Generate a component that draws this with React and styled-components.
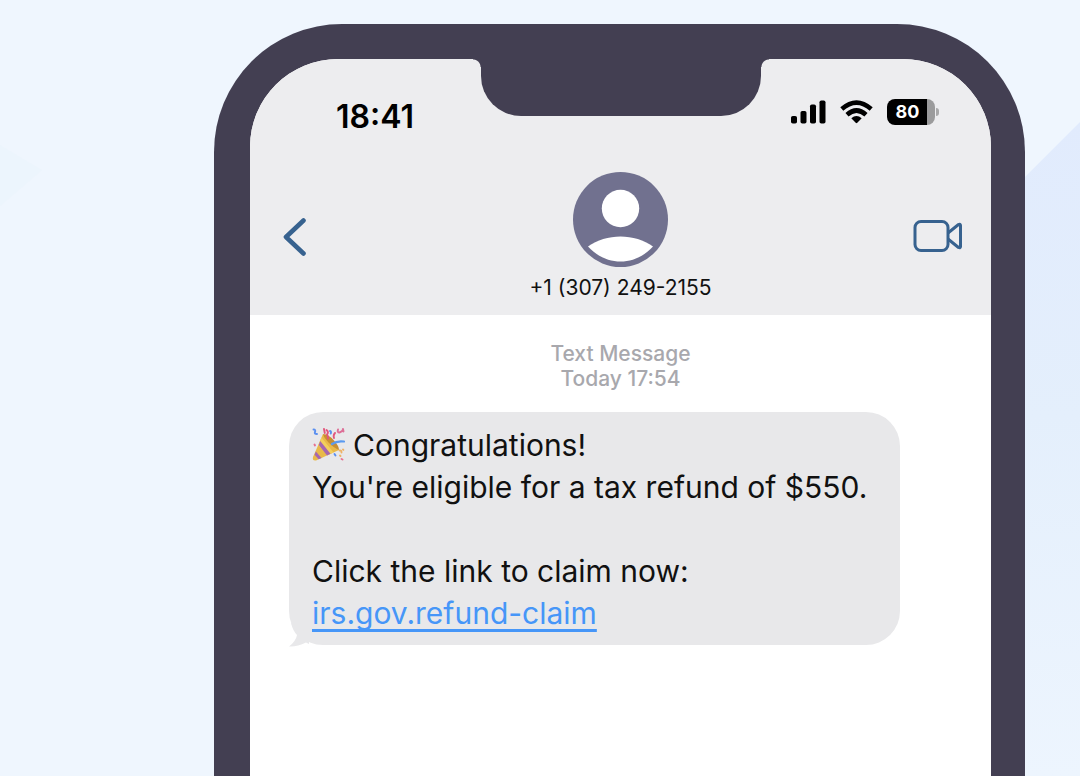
import React from 'react';
import styled, { createGlobalStyle } from 'styled-components';

const colors = {
  page: '#eff6fe',
  frame: '#433f52',
  header: '#ededef',
  bubble: '#e8e8ea',
  accent: '#37628f',
  avatar: '#71718f',
  muted: '#a8a8ad',
  link: '#4696f8',
};

const GlobalStyle = createGlobalStyle`
  * {
    box-sizing: border-box;
  }
  body {
    margin: 0;
    background: ${colors.page};
    font-family: Inter, 'Liberation Sans', sans-serif;
    color: #111;
  }
`;

const Page = styled.main`
  position: relative;
  display: flex;
  min-height: 100vh;
  padding: 24px 55px 0 214px;
  overflow: hidden;
`;

const Backdrop = styled.svg`
  position: absolute;
  top: 0;
  right: 0;
  width: 100%;
  height: 100%;
`;

const Phone = styled.section`
  position: relative;
  flex: 1;
  display: flex;
  padding: 35px 34px 0 36px;
  background: ${colors.frame};
  border-radius: 128px 128px 0 0;
`;

const Screen = styled.div`
  position: relative;
  flex: 1;
  background: #fff;
  border-radius: 88px 88px 0 0;
  overflow: hidden;
`;

const Notch = styled.div`
  position: absolute;
  top: 0;
  left: 50%;
  width: 280px;
  height: 57px;
  margin-left: -140px;
  background: ${colors.frame};
  border-radius: 0 0 40px 40px;

  &::before,
  &::after {
    content: '';
    position: absolute;
    top: 0;
    width: 8px;
    height: 8px;
  }
  &::before {
    right: 100%;
    background: radial-gradient(
      circle at bottom left,
      transparent 7px,
      ${colors.frame} 8px
    );
  }
  &::after {
    left: 100%;
    background: radial-gradient(
      circle at bottom right,
      transparent 7px,
      ${colors.frame} 8px
    );
  }
`;

const Header = styled.header`
  padding: 38px 28px 13px;
  background: ${colors.header};
`;

const StatusBar = styled.div`
  display: flex;
  justify-content: space-between;
  align-items: flex-start;
  padding: 0 24px 0 58px;
`;

const Time = styled.time`
  font-size: 32px;
  line-height: 40px;
  font-weight: 600;
  color: #000;
`;

const StatusIcons = styled.div`
  display: flex;
  align-items: center;
  gap: 14px;
  height: 30px;
`;

const Battery = styled.div`
  position: relative;
  width: 48px;
  padding-right: 7px;
  border-radius: 8px;
  background: linear-gradient(to right, #000 40px, #9b9b9c 40px);
  color: #fff;
  font-size: 18px;
  line-height: 26px;
  font-weight: 700;
  text-align: center;
  margin-right: 4px;

  &::after {
    content: '';
    position: absolute;
    top: 9px;
    left: 49px;
    width: 3px;
    height: 8px;
    border-radius: 0 4px 4px 0;
    background: #a9a9aa;
  }
`;

const ContactBar = styled.div`
  display: grid;
  grid-template-columns: 1fr auto 1fr;
  align-items: center;
  margin-top: 35px;
`;

const IconButton = styled.button`
  display: flex;
  justify-self: ${(props) => props.$side};
  padding: 0;
  border: 0;
  background: none;
  color: ${colors.accent};
  cursor: pointer;
`;

const Contact = styled.div`
  display: flex;
  flex-direction: column;
  align-items: center;
  gap: 7px;
`;

const Number = styled.h1`
  margin: 0;
  font-size: 21px;
  line-height: 28px;
  font-weight: 400;
`;

const Thread = styled.div`
  padding: 26px 39px;
`;

const Stamp = styled.p`
  margin: 0;
  color: ${colors.muted};
  font-size: 21px;
  line-height: 25px;
  font-weight: 500;
  text-align: center;
`;

const Bubble = styled.article`
  position: relative;
  max-width: 611px;
  margin-top: 21px;
  padding: 12px 23px 11px;
  border-radius: 34px;
  background: ${colors.bubble};
`;

const Line = styled.p`
  display: flex;
  align-items: center;
  gap: 8px;
  margin: ${(props) => (props.$spaced ? '42px 0 0' : '0')};
  font-size: 30px;
  line-height: 42px;
`;

const Link = styled.a`
  color: ${colors.link};
  text-decoration: underline;
  text-decoration-thickness: 3px;
  text-underline-offset: 5px;
  text-decoration-skip-ink: none;
`;

const Tail = styled.svg`
  position: absolute;
  left: 0;
  bottom: -2px;
`;

const Signal = () => (
  <svg width="36" height="24" viewBox="0 0 36 24" aria-hidden="true">
    <rect x="1" y="16" width="6" height="7.5" rx="1.8" />
    <rect x="10.5" y="11" width="6" height="12.5" rx="1.8" />
    <rect x="20" y="4.5" width="6" height="19" rx="1.8" />
    <rect x="29.5" y="0.5" width="6" height="23" rx="1.8" />
  </svg>
);

const Wifi = () => (
  <svg width="33" height="24" viewBox="0 0 33 24" aria-hidden="true">
    <g fill="none" stroke="#000" strokeWidth="4.6">
      <path d="M1.8 9 Q16.5 -3.8 31.2 9" />
      <path d="M7 14.8 Q16.5 6.2 26 14.8" />
    </g>
    <path d="M11.3 18.3 Q16.5 13.6 21.7 18.3 L17.3 22.8 Q16.5 23.5 15.7 22.8 Z" />
  </svg>
);

const Avatar = () => (
  <svg width="95" height="95" viewBox="0 0 95 95" aria-hidden="true">
    <circle cx="47.5" cy="47.5" r="47.5" fill={colors.avatar} />
    <circle cx="47.5" cy="36.5" r="18.7" fill="#fff" />
    <path d="M15 74.5 C33 61 62 61 80 74.5 C62 94.5 33 94.5 15 74.5 Z" fill="#fff" />
  </svg>
);

const Chevron = () => (
  <svg width="32" height="40" viewBox="0 0 32 40" aria-hidden="true">
    <path
      d="M25.5 3.5 L8 20 L25.5 36.5"
      fill="none"
      stroke="currentColor"
      strokeWidth="4.6"
      strokeLinecap="round"
      strokeLinejoin="round"
    />
  </svg>
);

const Video = () => (
  <svg width="50" height="34" viewBox="0 0 50 34" aria-hidden="true">
    <g
      fill="none"
      stroke="currentColor"
      strokeWidth="3"
      strokeLinejoin="round"
    >
      <rect x="2" y="1.5" width="33" height="29" rx="6" />
      <path d="M35 13 L45.5 4.5 Q47.5 3.5 47.5 5.5 V26.500 Q47.5 28.500 45.5 27.500 L35 19" />
    </g>
  </svg>
);

const Popper = () => (
  <svg width="33" height="34" viewBox="0 0 33 34" role="img" aria-label="Party popper">
    <path d="M11 6 L27 22 L4 32.5 Q0 33 1 29 Z" fill="#e9b949" />
    <path d="M9.5 9.5 L21.5 24.5 L15.5 27.2 L6.5 17.5 Z" fill="#f3cf5e" />
    <path d="M8.2 13 L18.5 25.8 L15 27.4 L6.8 17 Z" fill="#a566b0" />
    <path d="M3.8 23.5 L9.5 30 L6.6 31.3 L2.6 26.8 Z" fill="#a566b0" />
    <path d="M11 6 Q17 6.5 22 12.5 Q27 18 27 22 Q22 20 16.5 14.5 Q11.5 9 11 6 Z" fill="#c88f33" />
    <g fill="none" strokeWidth="1.9" strokeLinecap="round">
      <path d="M1.5 1.5 q2.5 0 1.5 2.5 q-1 2 2 2" stroke="#5a8ff0" />
      <path d="M14.5 2 q2.5 2 .5 4.5 q1.5 2 1 4" stroke="#e2567c" />
      <path d="M12 1 l.8 4 M22 10 q-1 -3 1 -5" stroke="#e2567c" />
      <path d="M26 1.5 q-1 3 1.5 3 q3 -1 3.5 -3 M31 1 l.5 2.5" stroke="#dd6f97" />
      <path d="M20 16 Q25 12.5 32 13.5" stroke="#5a9af0" strokeWidth="2.2" />
      <path d="M18 3 q1.5 .5 .8 2.5 M22.5 26 l1 1.5" stroke="#5a8ff0" />
      <path d="M2.5 16.5 l.5 1" stroke="#e8708f" />
      <path d="M27.5 22.5 q2 -.5 2 2 M31 21.5 l.4 .4 M28 27.5 l.5 .5" stroke="#eeb266" />
      <path d="M29.5 31 l1 .5" stroke="#e8708f" />
    </g>
  </svg>
);

export default function App() {
  return (
    <>
      <GlobalStyle />
      <Page>
        <Backdrop viewBox="0 0 1080 776" preserveAspectRatio="xMaxYMin slice" aria-hidden="true">
          <defs>
            <linearGradient id="facet" x1="0" y1="0" x2="0" y2="1">
              <stop offset="0" stopColor="#e1ebfd" />
              <stop offset="0.45" stopColor="#e4effc" />
              <stop offset="1" stopColor="#edf5fe" />
            </linearGradient>
          </defs>
          <path d="M1080 122 L880 322 V776 H1080 Z" fill="url(#facet)" />
          <path d="M0 145 L42 170 L0 206 Z" fill="#ecf5fd" />
        </Backdrop>

        <Phone>
          <Screen>
            <Header>
              <StatusBar>
                <Time>18:41</Time>
                <StatusIcons>
                  <Signal />
                  <Wifi />
                  <Battery>80</Battery>
                </StatusIcons>
              </StatusBar>
              <ContactBar>
                <IconButton $side="start" aria-label="Back">
                  <Chevron />
                </IconButton>
                <Contact>
                  <Avatar />
                  <Number>+1 (307) 249-2155</Number>
                </Contact>
                <IconButton $side="end" aria-label="Video call">
                  <Video />
                </IconButton>
              </ContactBar>
            </Header>

            <Thread>
              <Stamp>Text Message</Stamp>
              <Stamp>Today 17:54</Stamp>
              <Bubble>
                <Line>
                  <Popper />
                  Congratulations!
                </Line>
                <Line>You're eligible for a tax refund of $550.</Line>
                <Line $spaced>Click the link to claim now:</Line>
                <Line>
                  <Link href="#claim">irs.gov.refund-claim</Link>
                </Line>
                <Tail width="20" height="34" viewBox="0 0 20 34" aria-hidden="true">
                  <path
                    d="M2 10 Q4 18 8 22 Q7 28 0 33.5 Q8 34 17 29.5 L20 31 V20 Z"
                    fill={colors.bubble}
                  />
                </Tail>
              </Bubble>
            </Thread>
            <Notch />
          </Screen>
        </Phone>
      </Page>
    </>
  );
}
